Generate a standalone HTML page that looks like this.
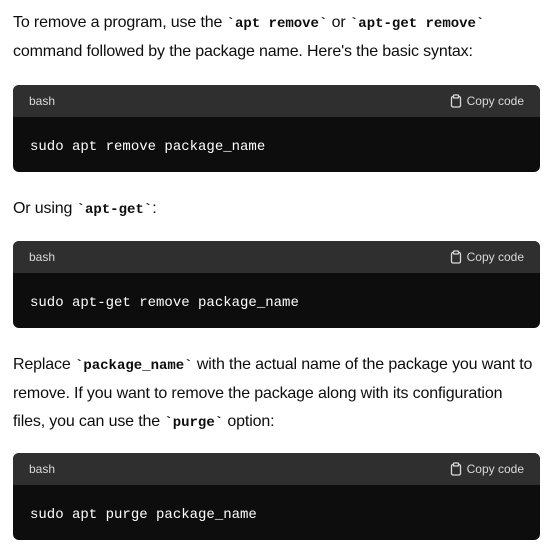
<!DOCTYPE html>
<html><head><style>
body{margin:0;background:#fff;width:545px;height:553px;overflow:hidden;font-family:"Liberation Sans",sans-serif;color:#0d0d0d;font-size:16px;}
p{margin:0;line-height:28px;position:absolute;left:13px;width:540px;letter-spacing:-0.15px;white-space:nowrap;}
code{font-family:"Liberation Mono",monospace;font-weight:bold;font-size:14px;letter-spacing:0;}
.cb{position:absolute;left:13px;width:527px;height:87px;border-radius:6px;overflow:hidden;background:#0d0d0d;}
.hd{height:32px;background:#2f2f2f;color:#d9d9d9;font-size:12px;display:flex;align-items:center;justify-content:space-between;padding:0 16px;}
.hd span{display:flex;align-items:center;gap:4px;}
.bd{color:#fff;font-family:"Liberation Mono",monospace;font-size:14px;padding:3px 17px 0;line-height:55px;}
</style></head><body>
<p style="top:9px">To remove a program, use the <code>`apt remove`</code> or <code>`apt-get remove`</code><br>command followed by the package name. Here's the basic syntax:</p>
<div class="cb" style="top:85px"><div class="hd">bash<span><svg width="14" height="14" viewBox="0 0 14 14" fill="none" stroke="#d9d9d9" stroke-width="1.3"><rect x="2.5" y="2.5" width="9" height="10.5" rx="1.5"/><rect x="4.5" y="1" width="5" height="3" rx="0.8" fill="#2f2f2f"/></svg>Copy code</span></div><div class="bd">sudo apt remove package_name</div></div>
<p style="top:195px">Or using <code>`apt-get`</code>:</p>
<div class="cb" style="top:241px"><div class="hd">bash<span><svg width="14" height="14" viewBox="0 0 14 14" fill="none" stroke="#d9d9d9" stroke-width="1.3"><rect x="2.5" y="2.5" width="9" height="10.5" rx="1.5"/><rect x="4.5" y="1" width="5" height="3" rx="0.8" fill="#2f2f2f"/></svg>Copy code</span></div><div class="bd">sudo apt-get remove package_name</div></div>
<p style="top:351px">Replace <code>`package_name`</code> with the actual name of the package you want to<br>remove. If you want to remove the package along with its configuration<br>files, you can use the <code>`purge`</code> option:</p>
<div class="cb" style="top:453px"><div class="hd">bash<span><svg width="14" height="14" viewBox="0 0 14 14" fill="none" stroke="#d9d9d9" stroke-width="1.3"><rect x="2.5" y="2.5" width="9" height="10.5" rx="1.5"/><rect x="4.5" y="1" width="5" height="3" rx="0.8" fill="#2f2f2f"/></svg>Copy code</span></div><div class="bd">sudo apt purge package_name</div></div>
</body></html>
